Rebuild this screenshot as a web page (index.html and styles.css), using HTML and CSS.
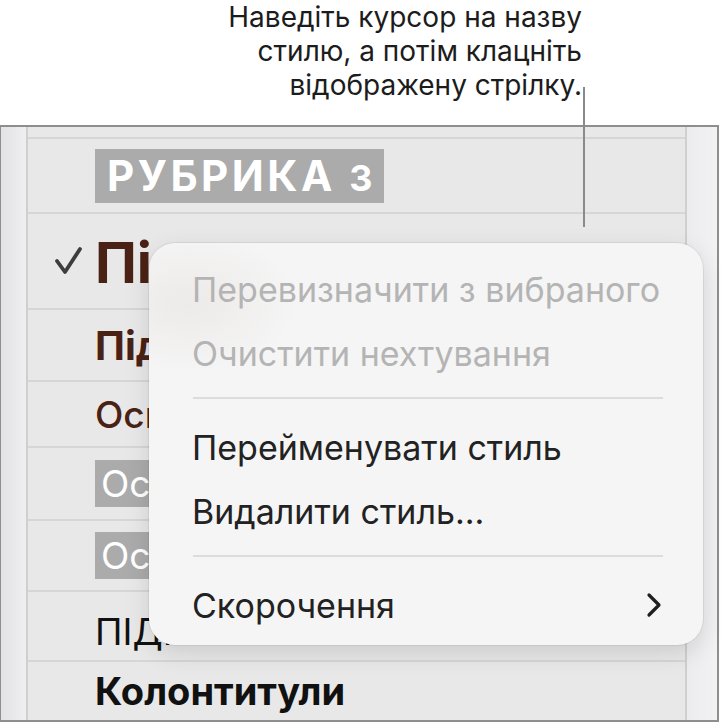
FILE: index.html
```html
<!DOCTYPE html>
<html lang="uk">

<head>
    <meta charset="UTF-8">
    <title>Стилі абзаців</title>
    <link rel="stylesheet" href="styles.css">
</head>

<body>

    <p class="hint">Наведіть курсор на назву<br>стилю, а потім клацніть<br>відображену стрілку.</p>
    <div class="leader"></div>

    <div class="panel">
        <div class="gutter gutter-left"></div>

        <ul class="style-list">
            <li class="row row-top"></li>
            <li class="row row-h3">
                <span class="mark"></span>
                <span class="tag tag-h3">РУБРИКА <span class="num">3</span></span>
            </li>
            <li class="row row-title">
                <span class="mark">
                    <svg width="30" height="30" viewBox="0 0 30 30">
                        <path d="M3 15 L11 26 L26 3" fill="none" stroke="#3d3d3d" stroke-width="3.8" stroke-linecap="round" stroke-linejoin="round"/>
                    </svg>
                </span>
                <span class="name name-title">Підзаголовок</span>
            </li>
            <li class="row row-sub">
                <span class="mark"></span>
                <span class="name name-sub">Підрозділ</span>
            </li>
            <li class="row row-body">
                <span class="mark"></span>
                <span class="name name-body">Основний</span>
            </li>
            <li class="row row-box">
                <span class="mark"></span>
                <span class="tag tag-body">Основний</span>
            </li>
            <li class="row row-box2">
                <span class="mark"></span>
                <span class="tag tag-body">Основний</span>
            </li>
            <li class="row row-caps">
                <span class="mark"></span>
                <span class="name name-caps">Підпис</span>
            </li>
            <li class="row row-footer">
                <span class="mark"></span>
                <span class="name name-footer">Колонтитули</span>
            </li>
        </ul>

        <div class="gutter gutter-right"></div>

        <!-- контекстне меню стилю -->
        <div class="menu">
            <div class="menu-item disabled">Перевизначити з вибраного</div>
            <div class="menu-item disabled">Очистити нехтування</div>
            <div class="menu-sep"></div>
            <div class="menu-item">Перейменувати стиль</div>
            <div class="menu-item">Видалити стиль...</div>
            <div class="menu-sep"></div>
            <div class="menu-item">
                <span>Скорочення</span>
                <svg class="chevron" width="18" height="26" viewBox="0 0 18 26">
                    <path d="M4 3 L14 13 L4 23" fill="none" stroke="#1f1f1f" stroke-width="3.2" stroke-linecap="round" stroke-linejoin="round"/>
                </svg>
            </div>
        </div>
    </div>

</body>

</html>
```

FILE: styles.css
```css
* {
    margin: 0;
    padding: 0;
    box-sizing: border-box;
}

body {
    font-family: 'Inter', 'Roboto', sans-serif;
    background-color: #fff;
    color: #1f1f1f;
    width: 721px;
    height: 726px;
    overflow: hidden;
    position: relative;
}

.hint {
    height: 125px;
    padding: 0 139px 0 0;
    text-align: right;
    font-size: 28px;
    line-height: 34px;
    color: #1c1c1c;
}

.leader {
    position: absolute;
    left: 583px;
    top: 87px;
    width: 2px;
    height: 140px;
    background-color: #8a8a8a;
    z-index: 3;
}

.panel {
    position: relative;
    display: flex;
    width: 719px;
    height: 597px;
    border: 2px solid #8e8e8e;
    border-left-width: 1px;
    background-color: #e8e8e8;
}

.gutter {
    background: linear-gradient(to right, #e2e2e4, #efeff1);
}

.gutter-left {
    width: 27px;
    border-right: 2px solid #cfcfcf;
    flex: none;
}

.gutter-right {
    width: 32px;
    border-left: 2px solid #cfcfcf;
    flex: none;
    background: linear-gradient(to right, #ececee, #f2f2f4);
}

.style-list {
    list-style: none;
    flex: 1;
    overflow: hidden;
}

.row {
    display: flex;
    align-items: center;
    border-top: 2px solid #d6d6d6;
    white-space: nowrap;
}

.row-top { height: 10px; border-top: none; }
.row-h3 { height: 75px; }
.row-title { height: 96px; }
.row-sub { height: 72px; }
.row-body { height: 66px; }
.row-box { height: 73px; }
.row-box2 { height: 71px; }
.row-caps { height: 70px; }
.row-footer { height: 60px; }

.mark {
    width: 67px;
    flex: none;
    display: flex;
    justify-content: flex-end;
    padding-right: 11px;
}

.tag {
    background-color: #ababab;
    color: #fff;
}

.tag-h3 {
    height: 54px;
    line-height: 54px;
    padding: 0 8px 0 12px;
    font-size: 42px;
    font-weight: 700;
    letter-spacing: 3.5px;
}

.tag-h3 .num {
    font-size: 36px;
}

.tag-body {
    height: 47px;
    line-height: 47px;
    padding: 0 6px;
    font-size: 37px;
}

.name {
    color: #4a2215;
}

.name-title {
    font-size: 56px;
    font-weight: 700;
    margin-top: 4px;
}

.name-sub {
    font-size: 40px;
    font-weight: 700;
}

.name-body {
    font-size: 37px;
    font-weight: 500;
}

.name-caps {
    font-size: 37px;
    text-transform: uppercase;
    color: #111;
    margin-top: 10px;
}

.name-footer {
    font-size: 38px;
    font-weight: 700;
    color: #111;
}

/* непрозоре меню з легким коричневим відблиском тексту під ним */
.menu {
    position: absolute;
    left: 148px;
    top: 116px;
    width: 554px;
    height: 402px;
    padding: 14px 0 8px;
    border-radius: 26px;
    background:
        radial-gradient(ellipse 110px 70px at 40px 60px, rgba(130, 90, 70, 0.07), transparent),
        #f5f5f5;
    box-shadow: 0 0 0 1px rgba(0, 0, 0, 0.06), 0 8px 24px rgba(0, 0, 0, 0.12);
    z-index: 2;
}

.menu-item {
    display: flex;
    align-items: center;
    justify-content: space-between;
    height: 64px;
    padding: 0 40px 0 43px;
    font-size: 34px;
    color: #222;
}

.menu-item.disabled {
    color: #b4b4b4;
}

.menu-sep {
    height: 2px;
    margin: 12px 40px 16px 44px;
    background-color: #dcdcdc;
}
```
